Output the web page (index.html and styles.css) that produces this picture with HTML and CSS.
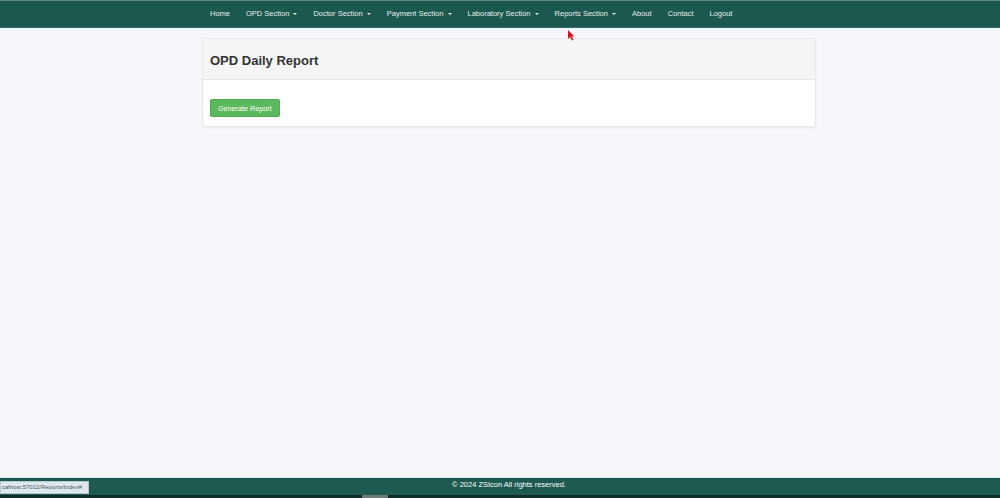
FILE: index.html
```html
<!DOCTYPE html>
<html lang="en">

<head>
    <meta charset="UTF-8">
    <meta name="viewport" content="width=device-width, initial-scale=1.0">
    <title>OPD Daily Report</title>
    <link rel="stylesheet" href="styles.css">
</head>

<body>
    <nav class="navbar">
        <div class="container">
            <ul class="nav">
                <li><a href="#">Home</a></li>
                <li><a href="#">OPD Section <span class="caret"></span></a></li>
                <li><a href="#">Doctor Section <span class="caret"></span></a></li>
                <li><a href="#">Payment Section <span class="caret"></span></a></li>
                <li><a href="#">Laboratory Section <span class="caret"></span></a></li>
                <li><a href="#">Reports Section <span class="caret"></span></a></li>
                <li><a href="#">About</a></li>
                <li><a href="#">Contact</a></li>
                <li><a href="#">Logout</a></li>
            </ul>
        </div>
    </nav>

    <main class="container">
        <div class="panel">
            <div class="panel-heading">
                <h3>OPD Daily Report</h3>
            </div>
            <div class="panel-body">
                <button class="btn-success">Generate Report</button>
            </div>
        </div>
    </main>

    <footer class="footer">
        <div class="container">
            <p>&copy; 2024 ZSIcon All rights reserved.</p>
        </div>
    </footer>
    <div class="taskbar"><span class="thumb"></span></div>

    <div class="status">calhost:57012/Reports/Index#</div>

    <svg class="cursor" width="8" height="11" viewBox="0 0 8 11">
        <path d="M1 0 L1 9 L3 7 L5 10.5 L6.5 9.8 L4.6 6.6 L7.5 6.6 Z" fill="#e0141e" />
    </svg>
</body>

</html>
```

FILE: styles.css
```css
html,
body {
    height: 100%;
}

body {
    margin: 0;
    background-color: #f5f7fa;
    font-family: "Liberation Sans", Arial, Helvetica, sans-serif;
    display: flex;
    flex-direction: column;
}

.container {
    width: 614px;
    margin-left: 202px;
}

.navbar {
    height: 26px;
    background-color: #1b584d;
    border-top: 1px solid #5e8a84;
    border-bottom: 1px solid #3d7068;
    box-shadow: 0 1px 0 #e6f8f8;
    flex-shrink: 0;
}

.nav {
    list-style: none;
    margin: 0;
    padding: 0;
    display: flex;
}

.nav a {
    display: block;
    padding: 0 8px;
    line-height: 26px;
    font-size: 7.5px;
    color: #e8efed;
    text-decoration: none;
}

.caret {
    display: inline-block;
    width: 0;
    height: 0;
    margin-left: 2px;
    vertical-align: middle;
    border-top: 2px solid #e8efed;
    border-left: 2px solid transparent;
    border-right: 2px solid transparent;
}

main {
    flex: 1;
    padding-top: 10px;
}

.panel {
    background-color: #fff;
    border: 1px solid #e6e8ea;
    border-radius: 2px;
    box-shadow: 0 1px 2px rgba(0, 0, 0, 0.05);
}

.panel-heading {
    height: 41px;
    padding: 3px 7px 0;
    box-sizing: border-box;
    display: flex;
    align-items: center;
    background-color: #f5f5f5;
    border-bottom: 1px solid #e6e6e6;
}

.panel-heading h3 {
    margin: 0;
    font-size: 13px;
    color: #333;
}

.panel-body {
    padding: 19px 7px 9px;
}

.btn-success {
    display: block;
    height: 18px;
    padding: 0 7px;
    font-family: inherit;
    font-size: 7.2px;
    color: #fff;
    background-color: #5cb85c;
    border: 1px solid #4cae4c;
    border-radius: 2px;
}

.footer {
    height: 17px;
    background-color: #1d5a4f;
    border-top: 1px solid #e4e7ea;
    flex-shrink: 0;
}

.footer p {
    margin: 0;
    text-align: center;
    line-height: 13px;
    font-size: 7.5px;
    color: #fff;
}

.taskbar {
    height: 3px;
    background-color: #0f2e28;
    flex-shrink: 0;
    display: flex;
}

.thumb {
    width: 26px;
    margin-left: 362px;
    background-color: #6f7c7a;
}

.status {
    position: fixed;
    left: 0;
    bottom: 4px;
    width: 86px;
    height: 11px;
    padding-left: 1px;
    background-color: #dde7ec;
    border: 1px solid #b9c6cc;
    font-size: 6px;
    line-height: 11px;
    color: #4a5a66;
    overflow: hidden;
    white-space: nowrap;
}

.cursor {
    position: absolute;
    left: 567px;
    top: 30px;
}
```
